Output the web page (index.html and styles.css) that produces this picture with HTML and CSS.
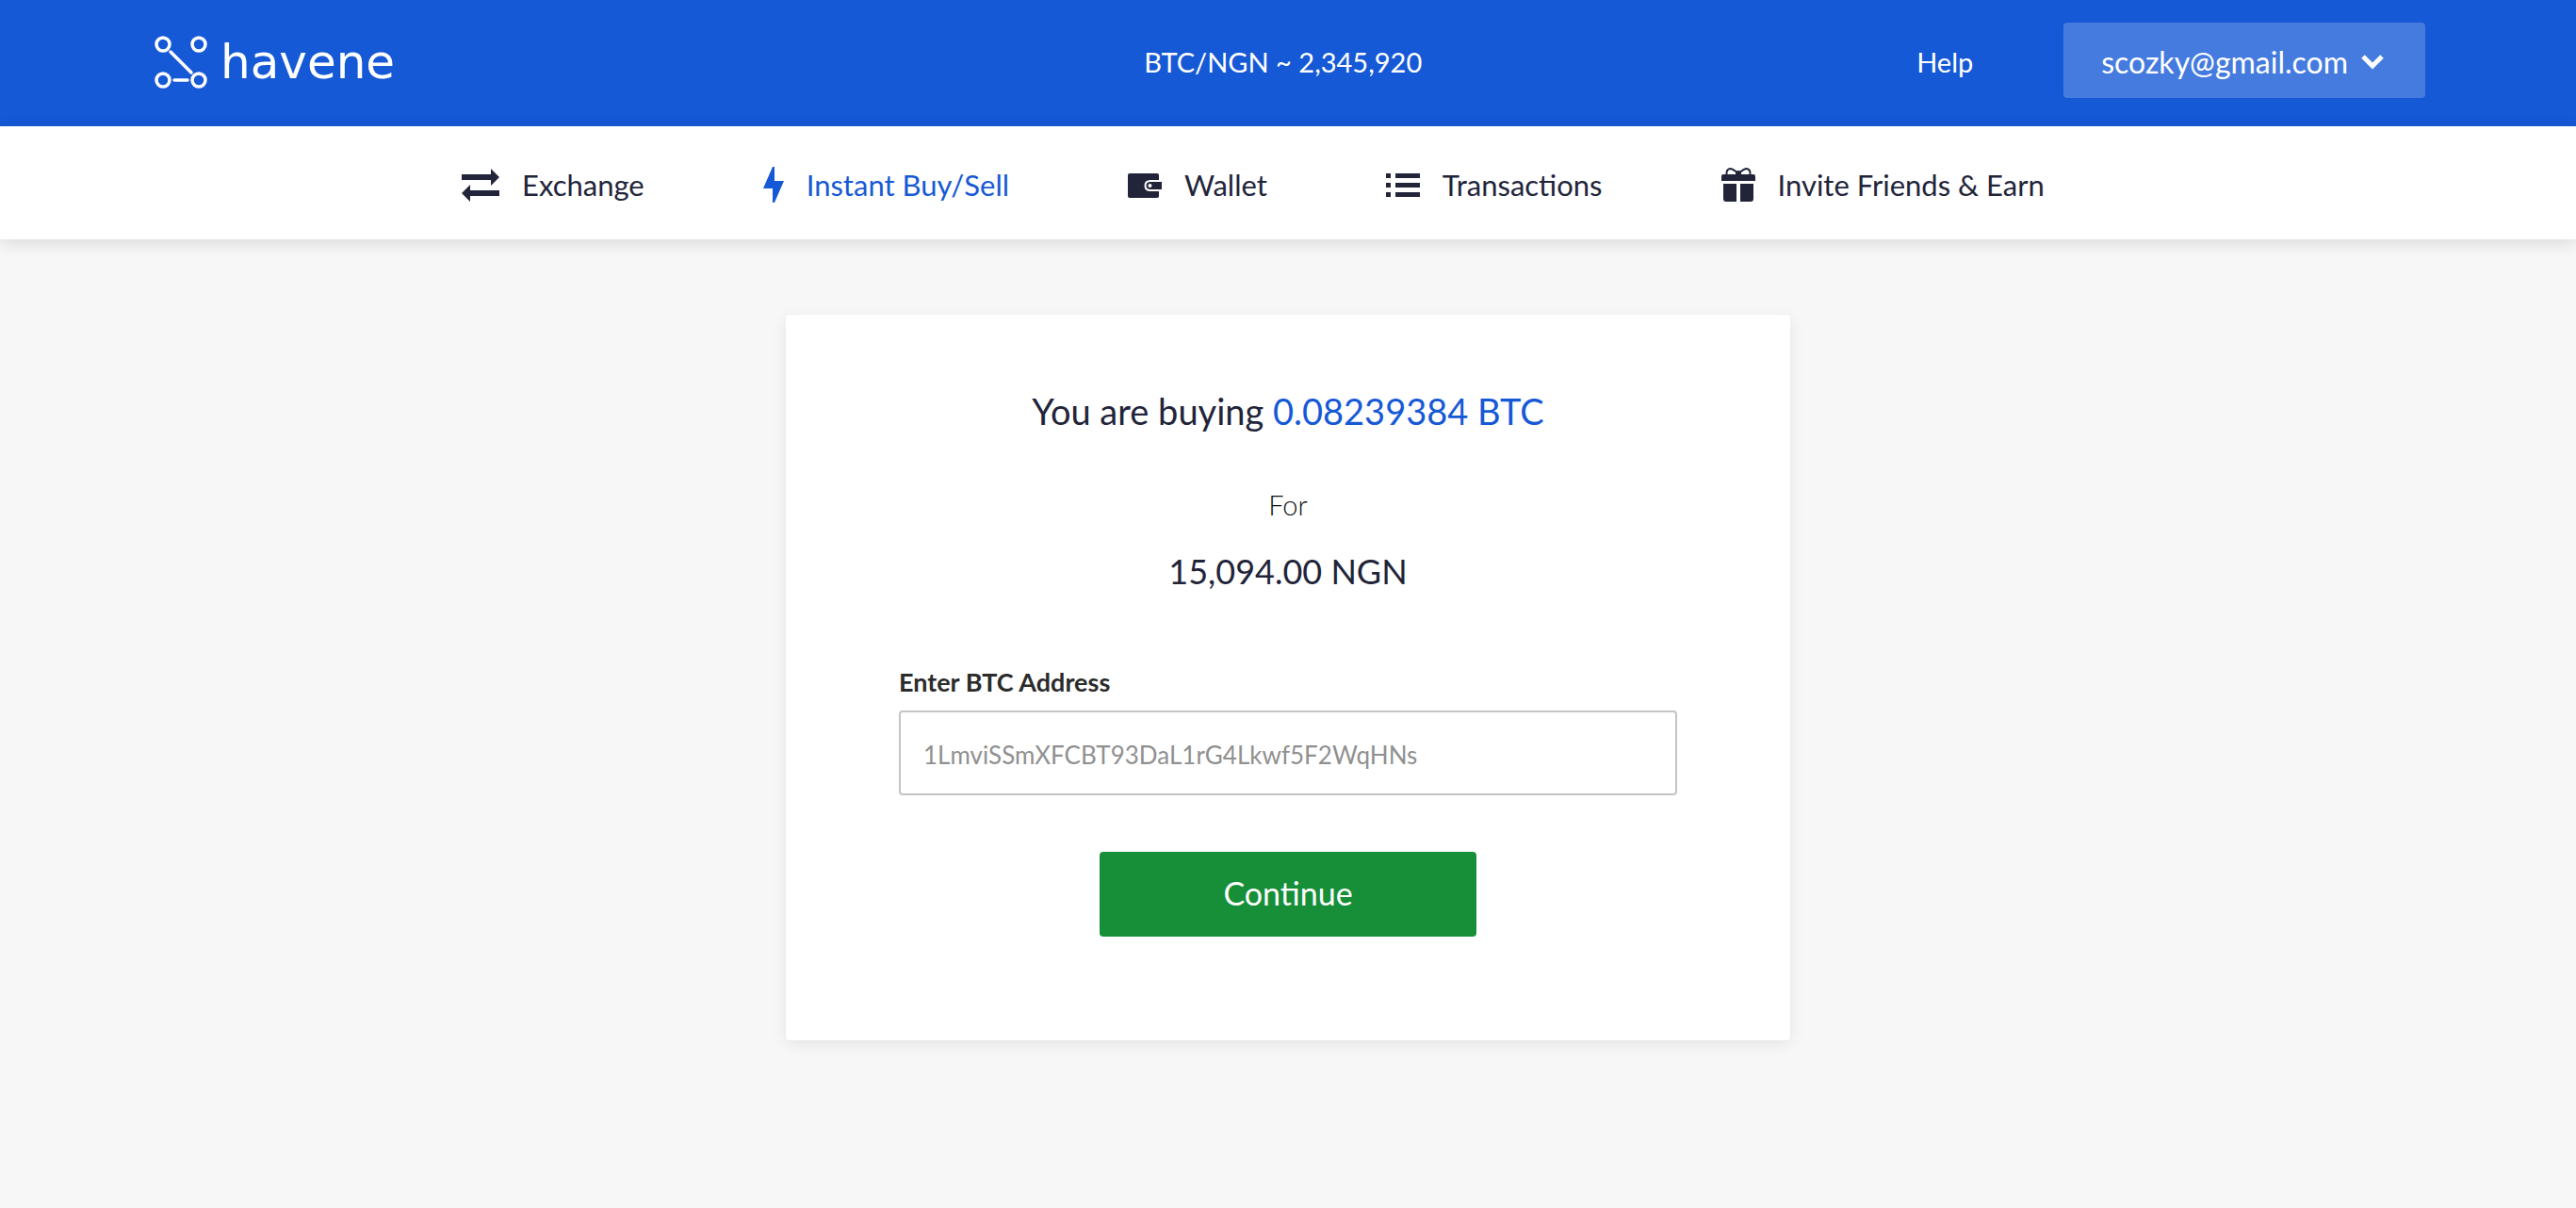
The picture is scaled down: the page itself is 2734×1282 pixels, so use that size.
FILE: index.html
```html
<!DOCTYPE html>
<html lang="en">
<head>
    <meta charset="UTF-8">
    <meta name="viewport" content="width=device-width, initial-scale=1.0">
    <title>Havene - Instant Buy/Sell</title>
    <link rel="stylesheet" href="styles.css">
</head>
<body>

    <!-- Top bar -->
    <header class="topbar">
        <a class="brand" href="#">
            <svg width="56" height="56" viewBox="0 0 56 56" fill="none" stroke="#fff" stroke-width="3.5" stroke-linecap="round">
                <circle cx="9" cy="9" r="7"/>
                <circle cx="47" cy="9" r="7"/>
                <circle cx="9" cy="47" r="7"/>
                <circle cx="47" cy="47" r="7"/>
                <path d="M17 17 39 39M21 47H35"/>
            </svg>
            <span>havene</span>
        </a>
        <span class="rate">BTC/NGN ~ 2,345,920</span>
        <div class="account">
            <a class="help" href="#">Help</a>
            <button class="account-btn" type="button">
                scozky@gmail.com
                <svg width="24" height="16" viewBox="0 0 24 16" fill="none" stroke="#fff" stroke-width="5">
                    <path d="M2 2 12 12 22 2"/>
                </svg>
            </button>
        </div>
    </header>

    <!-- Main navigation -->
    <nav class="menu">
        <a href="#">
            <svg width="40" height="36" viewBox="0 0 40 36" fill="currentColor">
                <path d="M0 7H31V1L40 10 31 19V13H0ZM40 30H9V36L0 27 9 18V24H40Z"/>
            </svg>
            Exchange
        </a>
        <a class="active" href="#">
            <svg width="22" height="38" viewBox="0 0 22 38" fill="currentColor">
                <path d="M10 0H12V15H22L12 38H10V23H0Z"/>
            </svg>
            Instant Buy/Sell
        </a>
        <a href="#">
            <svg width="36" height="36" viewBox="0 0 36 36" fill="currentColor">
                <path d="M2 6H31Q33 6 33 8V13H24Q17.5 13 17.5 19T24 25H33V30Q33 32 31 32H2Q0 32 0 30V8Q0 6 2 6Z"/>
                <path fill-rule="evenodd" d="M24 15H36V23H24Q19.5 23 19.5 19T24 15ZM23.5 17A2 2 0 1 0 23.5 21 2 2 0 1 0 23.5 17Z"/>
            </svg>
            Wallet
        </a>
        <a href="#">
            <svg width="36" height="36" viewBox="0 0 36 36" fill="currentColor">
                <path d="M0 6h5v5H0zM10 6h26v5H10zM0 16h5v5H0zM10 16h26v5H10zM0 26h5v5H0zM10 26h26v5H10z"/>
            </svg>
            Transactions
        </a>
        <a href="#">
            <svg width="36" height="36" viewBox="0 0 36 36" fill="currentColor">
                <path d="M2 7H34Q36 7 36 9V14H0V9Q0 7 2 7ZM2 17H16V36H5Q2 36 2 33ZM20 17H34V33Q34 36 31 36H20Z"/>
                <path d="M18 6Q12 1 9 1 5 2 5.500 7M18 6Q24 1 27 1 31 2 30.5 7" fill="none" stroke="currentColor" stroke-width="2"/>
                <circle cx="18" cy="6" r="3"/>
            </svg>
            Invite Friends &amp; Earn
        </a>
    </nav>

    <!-- Purchase card -->
    <main>
        <form class="card">
            <h1>You are buying <span class="amount">0.08239384 BTC</span></h1>
            <p class="for">For</p>
            <p class="price">15,094.00 NGN</p>

            <label for="btc-address">Enter BTC Address</label>
            <input type="text" id="btc-address" placeholder="1LmviSSmXFCBT93DaL1rG4Lkwf5F2WqHNs">
            <button class="continue" type="submit">Continue</button>
        </form>
    </main>

</body>
</html>
```

FILE: styles.css
```css
* {
    box-sizing: border-box;
}
body {
    margin: 0;
    min-height: 100vh;
    background: #f7f7f7;
    color: #22243a;
    font-family: Lato, sans-serif;
    font-size: 29px;
    line-height: 40px;
}
a {
    color: inherit;
    text-decoration: none;
}
button,
input {
    font: inherit;
}

/* top bar */
.topbar {
    display: grid;
    grid-template-columns: 9fr 7fr auto;
    align-items: center;
    padding: 24px 160px 30px;
    background: #1659d6;
    color: #fff;
}
.brand {
    display: flex;
    align-items: center;
    gap: 14px;
    padding: 4px 0 0 4px;
    font-family: "DejaVu Sans", sans-serif;
    font-size: 50px;
}
.rate,
.help {
    padding-top: 4px;
}
.account {
    display: flex;
    align-items: center;
    gap: 96px;
}
.account-btn {
    display: flex;
    align-items: center;
    gap: 14px;
    height: 80px;
    padding: 4px 44px 0 40px;
    border: none;
    border-radius: 4px;
    background: #457bdf;
    color: #fff;
    font-size: 32px;
    cursor: pointer;
}

/* navigation */
.menu {
    display: flex;
    gap: 126px;
    height: 120px;
    padding: 4px 16% 0 490px;
    background: #fff;
    box-shadow: 0 4px 16px rgba(0, 0, 0, 0.12);
    font-size: 31px;
    white-space: nowrap;
}
.menu a {
    display: flex;
    align-items: center;
    gap: 24px;
}
.menu .active {
    color: #1659d6;
}

/* card */
.card {
    width: 1066px;
    max-width: 100%;
    margin: 80px auto;
    padding: 78px 120px 110px;
    border-radius: 4px;
    background: #fff;
    box-shadow: 0 4px 16px rgba(0, 0, 0, 0.08);
    text-align: center;
}
.card h1,
.price {
    margin: 0;
    font-size: 38px;
    font-weight: 400;
    line-height: 48px;
}
.card .price {
    font-size: 36px;
}
.amount {
    color: #1659d6;
}
.for {
    margin: 56px 0 26px;
    color: #111;
    font-weight: 300;
}
.card label {
    display: block;
    margin: 74px 0 10px;
    color: #2b2b2b;
    font-size: 27px;
    font-weight: 700;
    text-align: left;
}
.card input {
    width: 100%;
    height: 90px;
    padding: 4px 24px 0;
    border: 2px solid #c4c4c4;
    border-radius: 4px;
    background: #fff;
    font-size: 26px;
}
.card input::placeholder {
    color: #909090;
}
.continue {
    width: 400px;
    height: 90px;
    margin-top: 60px;
    padding-bottom: 4px;
    border: none;
    border-radius: 4px;
    background: #168f38;
    color: #fff;
    font-size: 34px;
    cursor: pointer;
}
```
